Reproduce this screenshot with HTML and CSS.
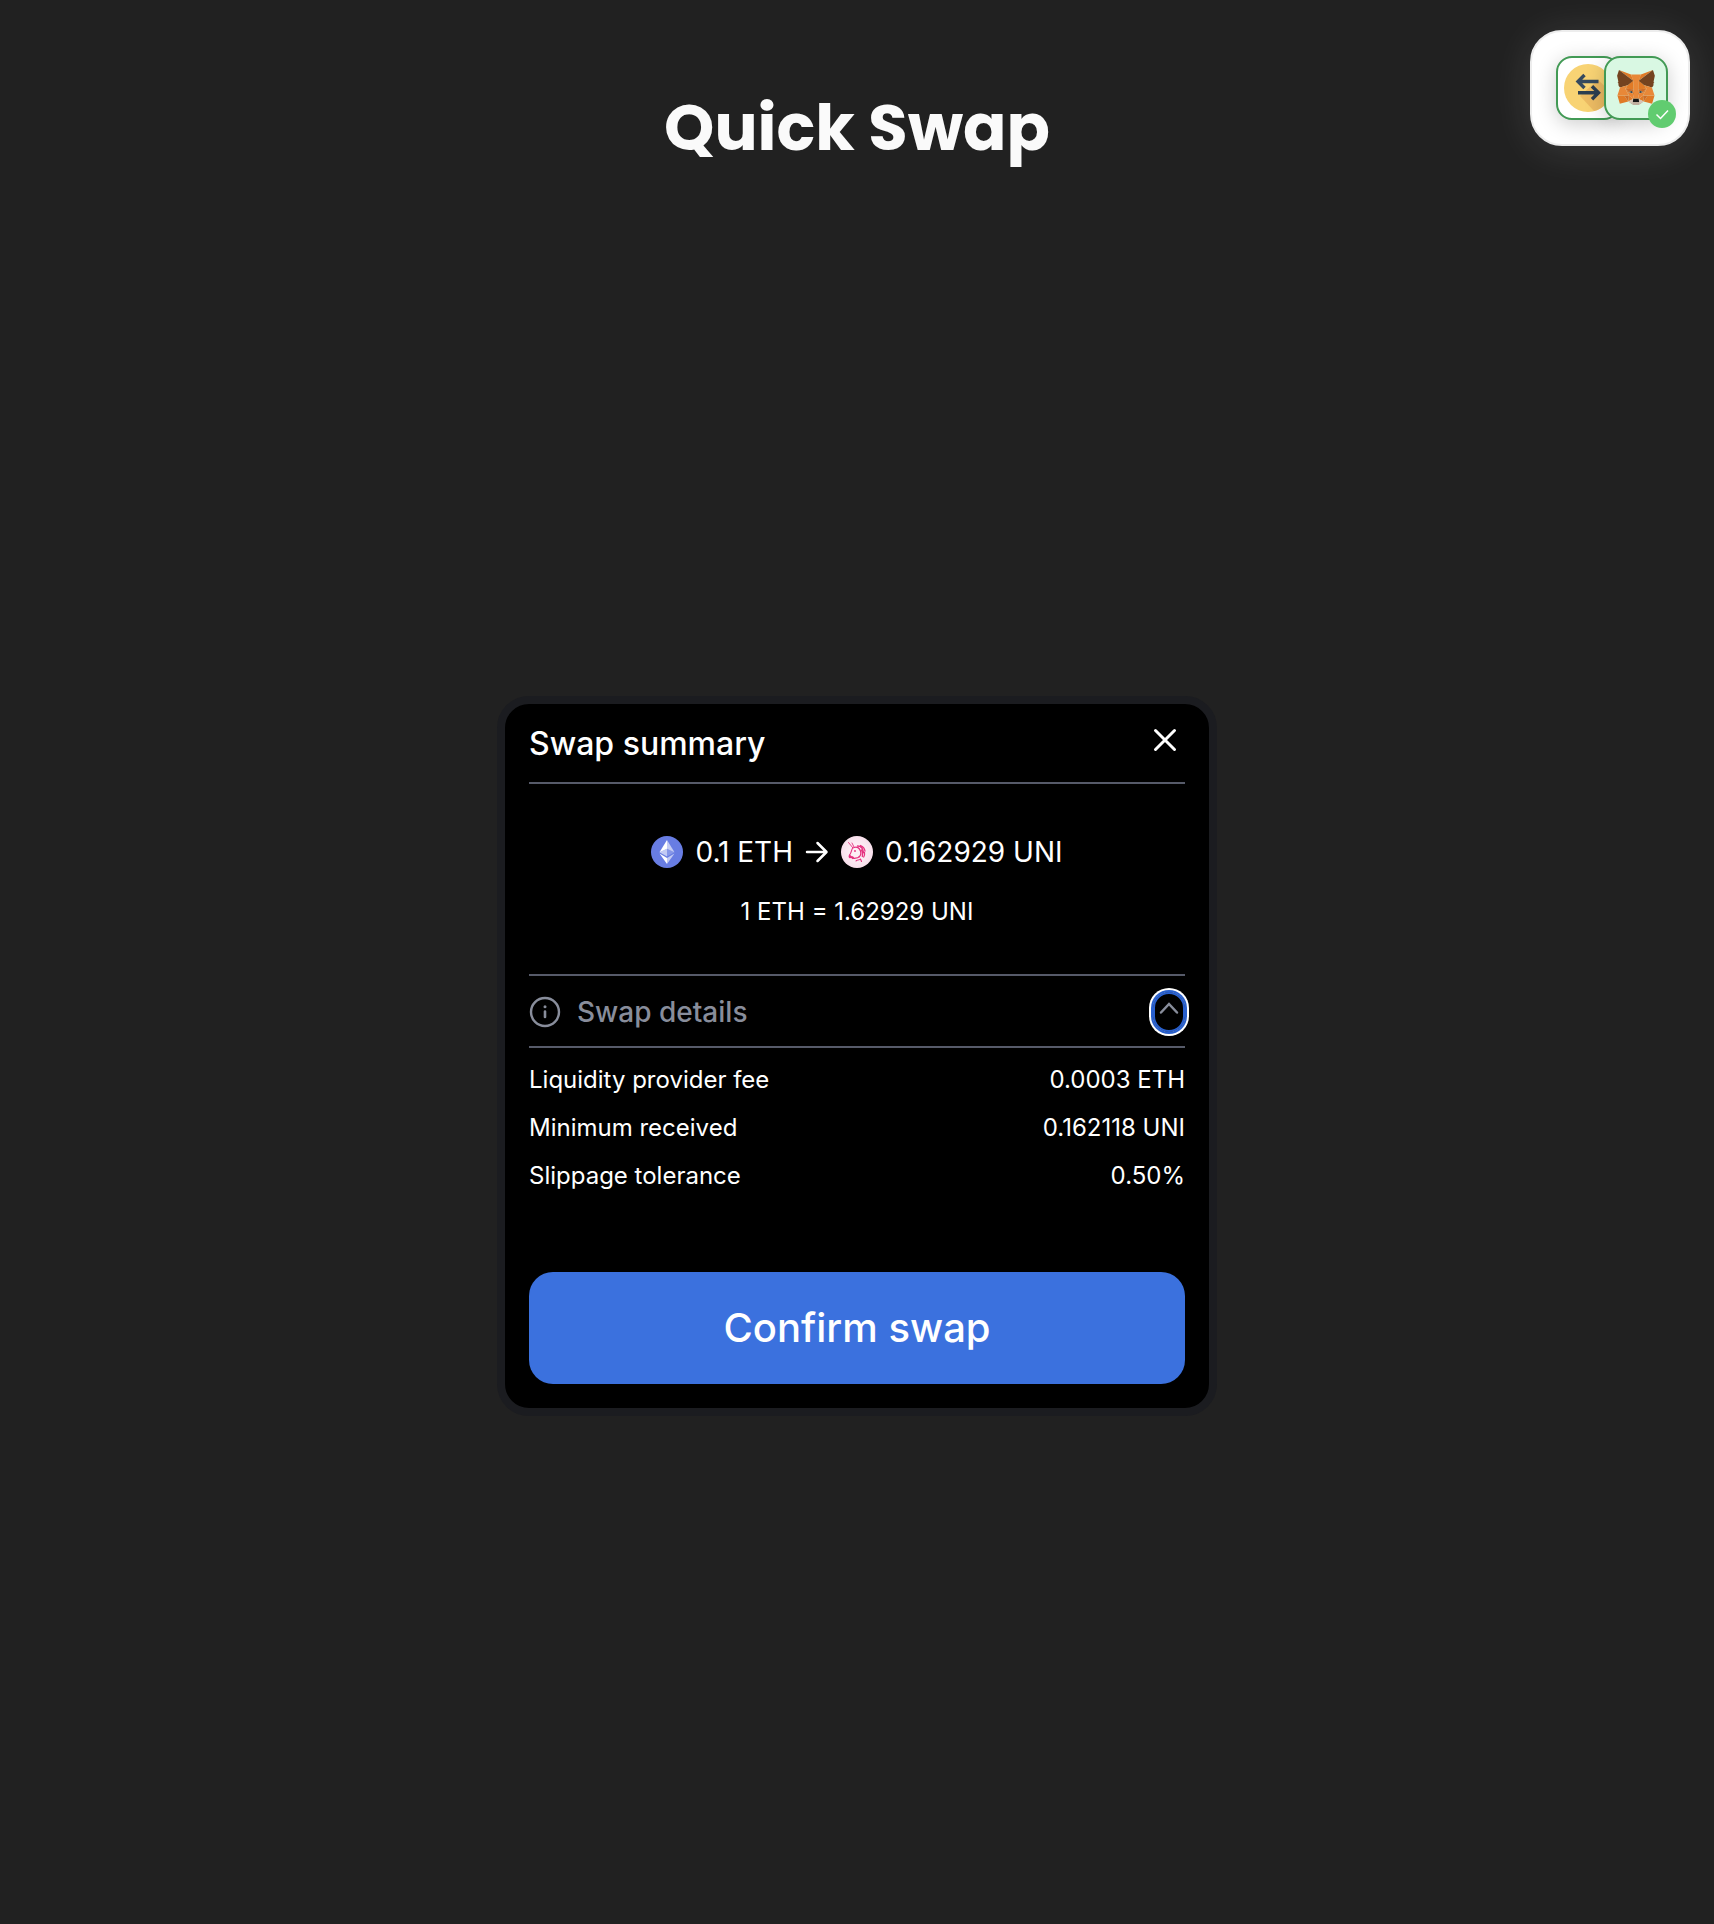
FILE: index.html
```html
<!DOCTYPE html>
<html lang="en">
<head>
<meta charset="utf-8">
<meta name="viewport" content="width=device-width, initial-scale=1">
<title>Quick Swap</title>
<link rel="stylesheet" href="styles.css">
</head>
<body>
<header class="page-header">
  <h1 class="page-title">Quick Swap</h1>
</header>

<button class="account" type="button" aria-label="Open account center">
  <span class="account-icons">
    <span class="account-tile">
      <svg class="swap-logo" viewBox="0 0 48 48" aria-hidden="true">
        <circle cx="24" cy="24" r="24" fill="#f8d374"/>
        <path d="M16 32 30 47A24 24 0 0 0 47.500 29L34 15.500Z" fill="#ecbb63"/>
        <g fill="none" stroke-width="3.400">
          <path d="M34.500 17.500H14M20.500 11 14 17.500l6.500 6.500" stroke="#35495e"/>
          <path d="M14 28.700h20.500M28 22.200l6.500 6.500-6.500 6.500" stroke="#2c3e50"/>
        </g>
      </svg>
    </span>
    <span class="account-tile account-tile-wallet">
      <svg class="fox-logo" viewBox="31 35 257 238" aria-hidden="true">
        <g fill="#e07a26">
          <path d="M274.100 35.500 174.600 109.400 193 65.800ZM44.400 35.500l98.700 74.600-17.500-44.300Z"/>
          <path d="M238.300 206.800 211.800 247.400 268.500 263 284.800 207.700ZM33.900 207.700 50.100 263 106.800 247.400 80.300 206.800Z"/>
          <path d="M103.600 138.200 87.800 162.100 144.100 164.600 142.100 104.100ZM214.900 138.200 175.900 103.400 174.600 164.600 230.800 162.100Z"/>
          <path d="M106.800 247.400 140.600 230.900 111.400 208.100ZM177.900 230.900 211.800 247.400 207.100 208.100Z"/>
        </g>
        <path d="M211.800 247.400 177.900 230.900 180.600 253 180.300 262.300ZM106.800 247.400 138.300 262.300 138.100 253 140.600 230.900Z" fill="#d7c1b3"/>
        <path d="M106.800 247.400 111.600 206.800 80.300 207.700ZM207 206.800 211.800 247.400 238.300 207.700ZM230.800 162.100 174.600 164.600 179.800 193.500 188.100 176.100 208.100 185.200ZM110.600 185.200 130.600 176.100 138.800 193.500 144.100 164.600 87.800 162.100Z" fill="#cd6c27"/>
        <path d="M138.800 193.500 110.600 185.200 130.500 176.100ZM179.700 193.500 188 176.100 208 185.200Z" fill="#3d4a52"/>
        <path d="M87.800 162.100 111.400 208.100 110.600 185.200ZM208.100 185.200 207.100 208.100 230.800 162.100ZM144.100 164.600 138.800 193.500 145.400 227.600 146.900 182.700ZM174.600 164.600 171.900 182.600 173.100 227.600 179.800 193.500Z" fill="#e07a2a"/>
        <path d="M179.800 193.500 173.100 227.600 177.900 230.900 207.100 208.100 208.100 185.200ZM110.600 185.200 111.400 208.100 140.600 230.900 145.400 227.600 138.800 193.500Z" fill="#ea8434"/>
        <path d="M180.300 262.300 180.600 253 178.100 250.800 140.400 250.800 138.100 253 138.300 262.300 106.800 247.400 117.800 256.400 140.100 271.900 178.400 271.900 200.800 256.400 211.800 247.400Z" fill="#c0ad9e"/>
        <path d="M177.900 230.900 173.100 227.600 145.400 227.600 140.600 230.900 138.100 253 140.400 250.800 178.100 250.800 180.600 253Z" fill="#161616"/>
        <path d="M278.300 114.200 286.800 73.400 274.100 35.500 177.900 106.900 214.900 138.200 267.200 153.500 278.800 140 273.800 136.400 281.800 129.100 275.600 124.300 283.600 118.200ZM31.800 73.400 40.300 114.200 34.900 118.200 42.900 124.300 36.800 129.100 44.800 136.400 39.800 140 51.300 153.500 103.600 138.200 140.600 106.900 44.400 35.500Z" fill="#74431f"/>
        <path d="M267.200 153.500 214.900 138.200 230.800 162.100 207.100 208.100 238.300 207.700 284.800 207.700ZM103.600 138.200 51.300 153.500 33.900 207.700 80.300 207.700 111.400 208.100 87.800 162.100ZM174.600 164.600 177.900 106.900 193.100 65.800 125.600 65.800 140.600 106.900 144.100 164.600 145.300 182.800 145.400 227.600 173.100 227.600 173.300 182.800Z" fill="#e88838"/>
      </svg>
      <span class="status-badge">
        <svg viewBox="0 0 28 28" aria-hidden="true"><path d="m8.500 14.500 4 4L20 10.500" fill="none" stroke="#fff" stroke-width="1.500"/></svg>
      </span>
    </span>
  </span>
</button>

<main class="page-main">
  <section class="card" aria-labelledby="summary-title">
    <div class="card-header">
      <h2 class="card-title" id="summary-title">Swap summary</h2>
      <button class="close-button" type="button" aria-label="Close">
        <svg class="close-icon" viewBox="0 0 24 24" aria-hidden="true"><path d="m2.500 2.500 19 19m0-19-19 19" fill="none" stroke="currentColor" stroke-width="3" stroke-linecap="round"/></svg>
      </button>
    </div>

    <div class="quote">
      <div class="quote-pair">
        <svg class="token" viewBox="0 0 32 32" aria-hidden="true">
          <circle cx="16" cy="16" r="16" fill="#687de3"/>
          <g fill="#fff">
            <path d="M16 4v8.870l7.497 3.350z" fill-opacity=".602"/>
            <path d="M16 4 8.500 16.220 16 12.870z"/>
            <path d="M16 21.968v6.027L23.500 17.616z" fill-opacity=".602"/>
            <path d="M16 27.995v-6.028L8.500 17.616z"/>
            <path d="m16 20.573 7.497-4.353L16 12.872z" fill-opacity=".2"/>
            <path d="M8.500 16.220 16 20.573v-7.701z" fill-opacity=".602"/>
          </g>
        </svg>
        <span>0.1 ETH</span>
        <svg class="arrow" viewBox="0 0 24 24" aria-hidden="true"><path d="M2 12h19M12.500 3l9 9-9 9" fill="none" stroke="currentColor" stroke-width="2.500" stroke-linecap="round" stroke-linejoin="round"/></svg>
        <svg class="token" viewBox="0 0 32 32" aria-hidden="true">
          <defs>
            <radialGradient id="uni-bg"><stop offset=".4" stop-color="#fdeff6"/><stop offset="1" stop-color="#f8dfeb"/></radialGradient>
          </defs>
          <circle cx="16" cy="16" r="16" fill="url(#uni-bg)"/>
          <g fill="none" stroke="#e5317f" stroke-linecap="round" stroke-linejoin="round">
            <path d="m7.500 6.500 4.500 5.500M11 7l2 4" stroke-width=".9"/>
            <path d="M12 11.500c-1.800 2-1.200 4.500-3.400 7.500" stroke-width="1.100"/>
            <path d="M13 11.500c3-1.200 5.500.5 6.500 3.500.8 2.500.3 4.500-1.500 6" stroke-width="1.300"/>
            <path d="M16.500 10c3 0 5.500 2 6 6.500M19.500 9.500c2.500 1 4 2.500 4.500 5.500M20.500 14c1.500 2.500 1.700 4 .8 6.500M23.500 16.500c.3 2 0 3.200-.8 4.500" stroke-width="1.300"/>
            <path d="M12.500 22.500c2-.6 4-.3 5.500-1.700M15 25c.5-1.500 3.500-.5 4.500-2l1 2.500" stroke-width="1.100"/>
          </g>
          <path d="M8.300 18.300c-1 1.500-1 3.200.2 4l1.900-.2.800 1.200 2-1.300c-.3-1.500-1.700-2-2.500-1.700Z" fill="#e5317f"/>
          <circle cx="14" cy="15" r=".9" fill="#e5317f"/>
        </svg>
        <span>0.162929 UNI</span>
      </div>
      <p class="quote-rate">1 ETH = 1.62929 UNI</p>
    </div>

    <div class="details-header">
      <svg class="info-icon" viewBox="0 0 32 32" aria-hidden="true">
        <circle cx="16" cy="16" r="14" fill="none" stroke="currentColor" stroke-width="2.400"/>
        <path d="M16 15.500v5.500" stroke="currentColor" stroke-width="2.600" stroke-linecap="round"/>
        <circle cx="16" cy="10.800" r="1.500" fill="currentColor"/>
      </svg>
      <h3 class="details-title">Swap details</h3>
      <button class="toggle-button" type="button" aria-label="Collapse swap details" aria-expanded="true" aria-controls="swap-details">
        <svg class="chevron" viewBox="0 0 24 24" aria-hidden="true"><path d="m4 12.500 8-8.500 8 8.500" fill="none" stroke="currentColor" stroke-width="2.500" stroke-linecap="round"/></svg>
      </button>
    </div>

    <dl class="details" id="swap-details">
      <div class="details-row"><dt>Liquidity provider fee</dt><dd>0.0003 ETH</dd></div>
      <div class="details-row"><dt>Minimum received</dt><dd>0.162118 UNI</dd></div>
      <div class="details-row"><dt>Slippage tolerance</dt><dd>0.50%</dd></div>
    </dl>

    <button class="confirm-button" type="button">Confirm swap</button>
  </section>
</main>
</body>
</html>
```
FILE: styles.css
```css
*,
*::before,
*::after {
  box-sizing: border-box;
}

body {
  display: flex;
  flex-direction: column;
  min-height: 100vh;
  margin: 0;
  background: #212121;
  color: #fff;
  font-family: Inter, "Liberation Sans", sans-serif;
}

h1,
h2,
h3,
p,
dl,
dd {
  margin: 0;
}

button {
  padding: 0;
  border: 0;
  background: none;
  color: inherit;
  font: inherit;
  cursor: pointer;
}

svg {
  display: block;
  flex: none;
}

.page-header {
  padding: 80px 24px 12px;
}

.page-title {
  color: #fafafa;
  font-family: Poppins, Inter, sans-serif;
  font-size: 64px;
  font-weight: 700;
  line-height: 96px;
  text-align: center;
}

/* Account center, floating in the top right corner */
.account {
  position: fixed;
  top: 30px;
  right: 24px;
  padding: 24px 20px 24px 24px;
  border: 2px solid #ededed;
  border-radius: 32px;
  background: #fff;
  box-shadow: 0 4px 40px rgba(255, 255, 255, 0.12);
}

.account-icons {
  display: flex;
}

.account-tile {
  display: flex;
  align-items: center;
  justify-content: center;
  width: 64px;
  height: 64px;
  border: 2px solid #429a55;
  border-radius: 16px;
  background: #fff;
  box-shadow: 0 4px 20px rgba(0, 0, 0, 0.2);
}

.account-tile-wallet {
  position: relative;
  margin-left: -16px;
  background: #d9f8e3;
}

.swap-logo {
  width: 48px;
}

.fox-logo {
  width: 38px;
}

.status-badge {
  position: absolute;
  right: -10px;
  bottom: -10px;
  width: 28px;
  border-radius: 50%;
  background: #61cc70;
}

.page-main {
  display: flex;
  flex: 1;
  align-items: center;
  justify-content: center;
}

.card {
  width: 100%;
  max-width: 720px;
  padding: 20px 24px 24px;
  border: 8px solid #1b1c20;
  border-radius: 32px;
  background: #000;
}

.card-header {
  display: flex;
  align-items: flex-start;
  justify-content: space-between;
  padding-bottom: 18px;
  border-bottom: 2px solid #565a69;
}

.card-title {
  font-size: 32px;
  font-weight: 500;
  line-height: 40px;
}

.close-button {
  display: flex;
  align-items: center;
  justify-content: center;
  width: 40px;
  height: 32px;
}

.close-icon {
  width: 24px;
}

.quote {
  display: flex;
  flex-direction: column;
  align-items: center;
  gap: 26px;
  padding: 50px 0 46px;
}

.quote-pair {
  display: flex;
  align-items: center;
  gap: 12px;
  font-size: 28px;
  line-height: 36px;
}

.token {
  width: 32px;
}

.arrow {
  width: 24px;
}

.quote-rate {
  font-size: 24px;
  line-height: 32px;
}

.details-header {
  display: flex;
  align-items: center;
  gap: 16px;
  padding: 16px 0 14px;
  border-top: 2px solid #565a69;
  border-bottom: 2px solid #565a69;
  color: #888d9b;
}

.info-icon {
  width: 32px;
}

.details-title {
  flex: 1;
  font-size: 28px;
  font-weight: 500;
  line-height: 40px;
}

.toggle-button {
  display: flex;
  align-items: center;
  justify-content: center;
  width: 32px;
  height: 40px;
  border-radius: 16px;
  box-shadow: inset 0 0 0 2px #285fcd, 0 0 0 2px #285fcd, 0 0 0 4px #fff;
}

.chevron {
  width: 24px;
}

.details {
  display: flex;
  flex-direction: column;
  gap: 16px;
  padding: 16px 0 80px;
  font-size: 24px;
  line-height: 32px;
}

.details-row {
  display: flex;
  justify-content: space-between;
}

.confirm-button {
  display: block;
  width: 100%;
  padding: 32px 24px;
  border-radius: 24px;
  background: #3b71de;
  font-size: 40px;
  font-weight: 500;
  line-height: 48px;
}
```
